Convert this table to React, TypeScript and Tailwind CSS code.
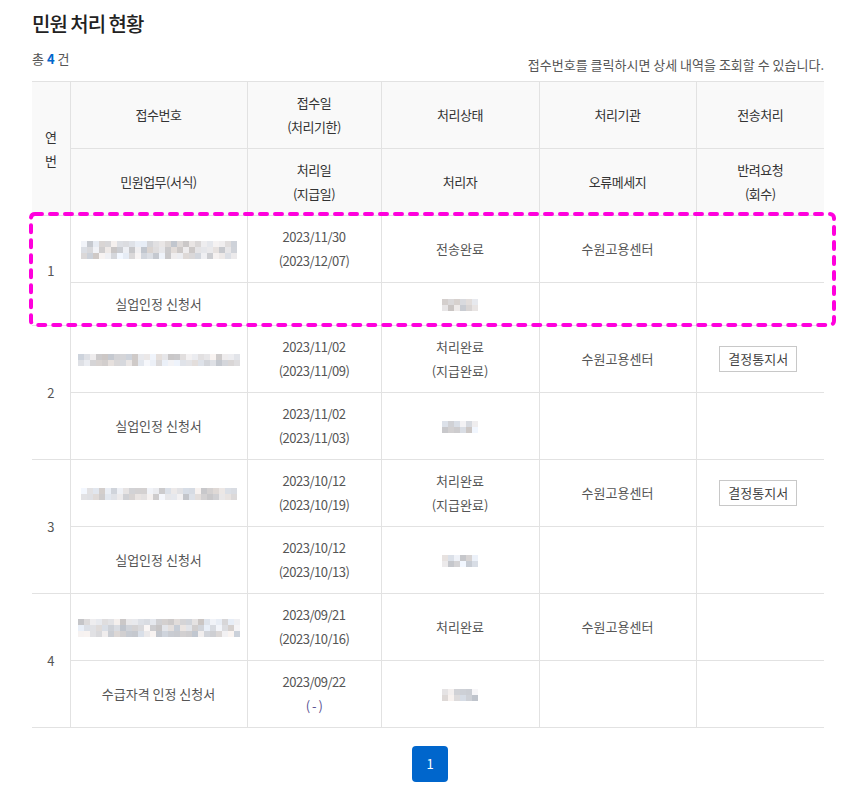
import React from 'react'

type Row = {
  no: number
  idCols: number
  idRows: number
  idSeed: number
  recv: string
  deadline?: string
  status: string[]
  org: string
  notice: boolean
  form: string
  proc?: string
  pay?: string
  handlerSeed: number
}

const rows: Row[] = [
  { no: 1, idCols: 26, idRows: 3, idSeed: 11, recv: '2023/11/30', deadline: '(2023/12/07)', status: ['전송완료'], org: '수원고용센터', notice: false, form: '실업인정 신청서', handlerSeed: 3 },
  { no: 2, idCols: 27, idRows: 2, idSeed: 27, recv: '2023/11/02', deadline: '(2023/11/09)', status: ['처리완료', '(지급완료)'], org: '수원고용센터', notice: true, form: '실업인정 신청서', proc: '2023/11/02', pay: '(2023/11/03)', handlerSeed: 7 },
  { no: 3, idCols: 26, idRows: 2, idSeed: 41, recv: '2023/10/12', deadline: '(2023/10/19)', status: ['처리완료', '(지급완료)'], org: '수원고용센터', notice: true, form: '실업인정 신청서', proc: '2023/10/12', pay: '(2023/10/13)', handlerSeed: 13 },
  { no: 4, idCols: 27, idRows: 3, idSeed: 59, recv: '2023/09/21', deadline: '(2023/10/16)', status: ['처리완료'], org: '수원고용센터', notice: false, form: '수급자격 인정 신청서', proc: '2023/09/22', pay: '(\u00a0-\u00a0)', handlerSeed: 19 },
]

// pixelated placeholder for masked personal data
const Mosaic = ({ cols, rows, seed }: { cols: number; rows: number; seed: number }) => {
  let s = seed * 9301 + 49297
  const next = () => {
    s = (s * 9301 + 49297) % 233280
    return s / 233280
  }
  const cells = Array.from({ length: cols * rows }, () => {
    const g = Math.round(196 + next() * 52)
    const t = Math.round((next() - 0.5) * 12)
    return `rgb(${g + t},${g},${g - t + 3})`
  })
  return (
    <div className="inline-grid align-middle" style={{ gridTemplateColumns: `repeat(${cols}, 6px)` }}>
      {cells.map((c, i) => (
        <div key={i} className="h-[6px] w-[6px]" style={{ backgroundColor: c }} />
      ))}
    </div>
  )
}

const th = 'border border-[#e2e2e2] bg-[#f9f9f9] px-1 py-[9px] text-center font-normal text-[#333] tracking-[-0.5px]'
const td = 'border border-[#e2e2e2] px-1 py-[9px] text-center text-[#555]'

export default function App() {
  return (
    <div className="min-h-[794px] bg-white font-['Noto_Sans_CJK_KR','Noto_Sans',sans-serif] text-[13px] leading-[24px]">
      <div className="ml-8 w-[792px]">
        <h2 className="mt-[10px] h-[28px] text-[20px] font-medium leading-[28px] tracking-[-1px] text-[#222]">민원 처리 현황</h2>
        <div className="flex h-[43px] items-start justify-between leading-[20px]">
          <p className="mt-[11px] text-[#555]">
            총 <span className="font-bold text-[#0066cc]">4</span> 건
          </p>
          <p className="mt-[17px] text-[#555]">접수번호를 클릭하시면 상세 내역을 조회할 수 있습니다.</p>
        </div>

        <div className="relative">
          <table className="w-[792px] table-fixed border-collapse border-t border-t-[#333]">
            <colgroup>
              <col className="w-[38px]" />
              <col className="w-[177px]" />
              <col className="w-[134px]" />
              <col className="w-[158px]" />
              <col className="w-[157px]" />
              <col className="w-[128px]" />
            </colgroup>
            <thead>
              <tr>
                <th rowSpan={2} className={`${th} border-l-0 px-[12px]`}>연 번</th>
                <th className={th}>접수번호</th>
                <th className={th}>
                  접수일
                  <br />
                  (처리기한)
                </th>
                <th className={th}>처리상태</th>
                <th className={th}>처리기관</th>
                <th className={`${th} border-r-0`}>전송처리</th>
              </tr>
              <tr>
                <th className={`${th} h-[66px]`}>민원업무(서식)</th>
                <th className={th}>
                  처리일
                  <br />
                  (지급일)
                </th>
                <th className={th}>처리자</th>
                <th className={th}>오류메세지</th>
                <th className={`${th} border-r-0`}>
                  반려요청
                  <br />
                  (회수)
                </th>
              </tr>
            </thead>
            <tbody>
              {rows.map((r) => (
                <React.Fragment key={r.no}>
                  <tr>
                    <td rowSpan={2} className={`${td} border-l-0`}>{r.no}</td>
                    <td className={`${td} h-[67px]`}>
                      <Mosaic cols={r.idCols} rows={r.idRows} seed={r.idSeed} />
                    </td>
                    <td className={`${td} tracking-[-0.5px]`}>
                      {r.recv}
                      <br />
                      {r.deadline}
                    </td>
                    <td className={td}>
                      {r.status.map((s, i) => (
                        <div key={i}>{s}</div>
                      ))}
                    </td>
                    <td className={td}>{r.org}</td>
                    <td className={`${td} border-r-0`}>
                      {r.notice && (
                        <button className="mr-[4px] h-[26px] w-[78px] border border-[#c8c8c8] bg-white text-[13px] leading-[24px] text-[#444]">
                          결정통지서
                        </button>
                      )}
                    </td>
                  </tr>
                  <tr>
                    <td className={td}>{r.form}</td>
                    <td className={`${td} tracking-[-0.5px]`}>
                      {r.proc && (
                        <>
                          {r.proc}
                          <br />
                          <span className={r.no === 4 ? 'text-[#5b5394]' : ''}>{r.pay}</span>
                        </>
                      )}
                    </td>
                    <td className={td}>
                      <Mosaic cols={6} rows={2} seed={r.handlerSeed} />
                    </td>
                    <td className={td}></td>
                    <td className={`${td} border-r-0`}></td>
                  </tr>
                </React.Fragment>
              ))}
            </tbody>
          </table>

          {/* highlight around the first record */}
          <svg className="pointer-events-none absolute left-[-3px] top-[131px]" width="807" height="115" viewBox="0 0 807 115">
            <rect x="2" y="2" width="803" height="111" rx="4" fill="none" stroke="#ff00dd" strokeWidth="4" strokeDasharray="7 8" strokeLinecap="round" />
          </svg>
        </div>

        <div className="mt-[18px] flex justify-center pl-[4px]">
          <button className="h-[36px] w-[36px] rounded-sm bg-[#0066cc] text-[13px] text-white">1</button>
        </div>
      </div>
    </div>
  )
}
